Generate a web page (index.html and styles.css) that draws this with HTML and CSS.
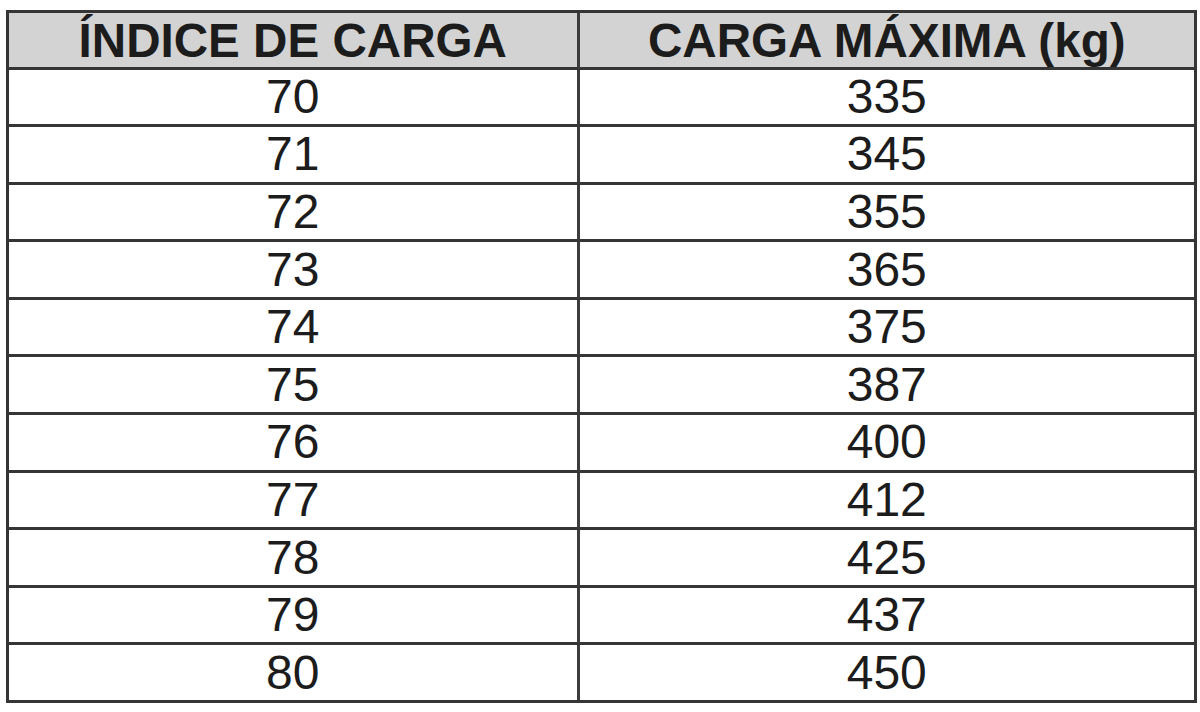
FILE: index.html
```html
<!DOCTYPE html>
<html lang="pt">
<head>
<meta charset="utf-8">
<title>Índice de carga</title>
<link rel="stylesheet" href="styles.css">
</head>
<body>
<table class="load-table">
  <thead>
    <tr class="head-row">
      <th class="col-a">ÍNDICE DE CARGA</th>
      <th class="col-b">CARGA MÁXIMA (kg)</th>
    </tr>
  </thead>
  <tbody>
    <tr><td class="col-a">70</td><td class="col-b">335</td></tr>
    <tr><td class="col-a">71</td><td class="col-b">345</td></tr>
    <tr><td class="col-a">72</td><td class="col-b">355</td></tr>
    <tr><td class="col-a">73</td><td class="col-b">365</td></tr>
    <tr><td class="col-a">74</td><td class="col-b">375</td></tr>
    <tr><td class="col-a">75</td><td class="col-b">387</td></tr>
    <tr><td class="col-a">76</td><td class="col-b">400</td></tr>
    <tr><td class="col-a">77</td><td class="col-b">412</td></tr>
    <tr><td class="col-a">78</td><td class="col-b">425</td></tr>
    <tr><td class="col-a">79</td><td class="col-b">437</td></tr>
    <tr class="last-row"><td class="col-a">80</td><td class="col-b">450</td></tr>
  </tbody>
</table>
</body>
</html>
```
FILE: styles.css
```css
html, body {
  margin: 0;
  padding: 0;
  background: #ffffff;
}

body {
  padding: 10px 0 0 6px;
  font-family: "Liberation Sans", Arial, sans-serif;
  color: #1c1c1c;
}

.load-table {
  border-collapse: separate;
  border-spacing: 0;
  border: 3px solid #353535;
  width: 1191px;
  table-layout: fixed;
}

.load-table th,
.load-table td {
  padding: 0;
  text-align: center;
  vertical-align: middle;
  line-height: 1;
  border-bottom: 3px solid #353535;
}

.load-table .col-a {
  width: 567.5px;
  border-right: 3px solid #3c3c3c;
}

.head-row {
  height: 56.5px;
}

.head-row th {
  background: #d3d3d3;
  font-weight: bold;
  font-size: 47.6px;
  padding-top: 2px;
}

.load-table tbody tr {
  height: 57.6px;
}

.load-table td {
  font-size: 48px;
  font-weight: normal;
}

.load-table tbody tr.last-row {
  height: 54.6px;
}

.last-row td {
  border-bottom: none;
}
```
